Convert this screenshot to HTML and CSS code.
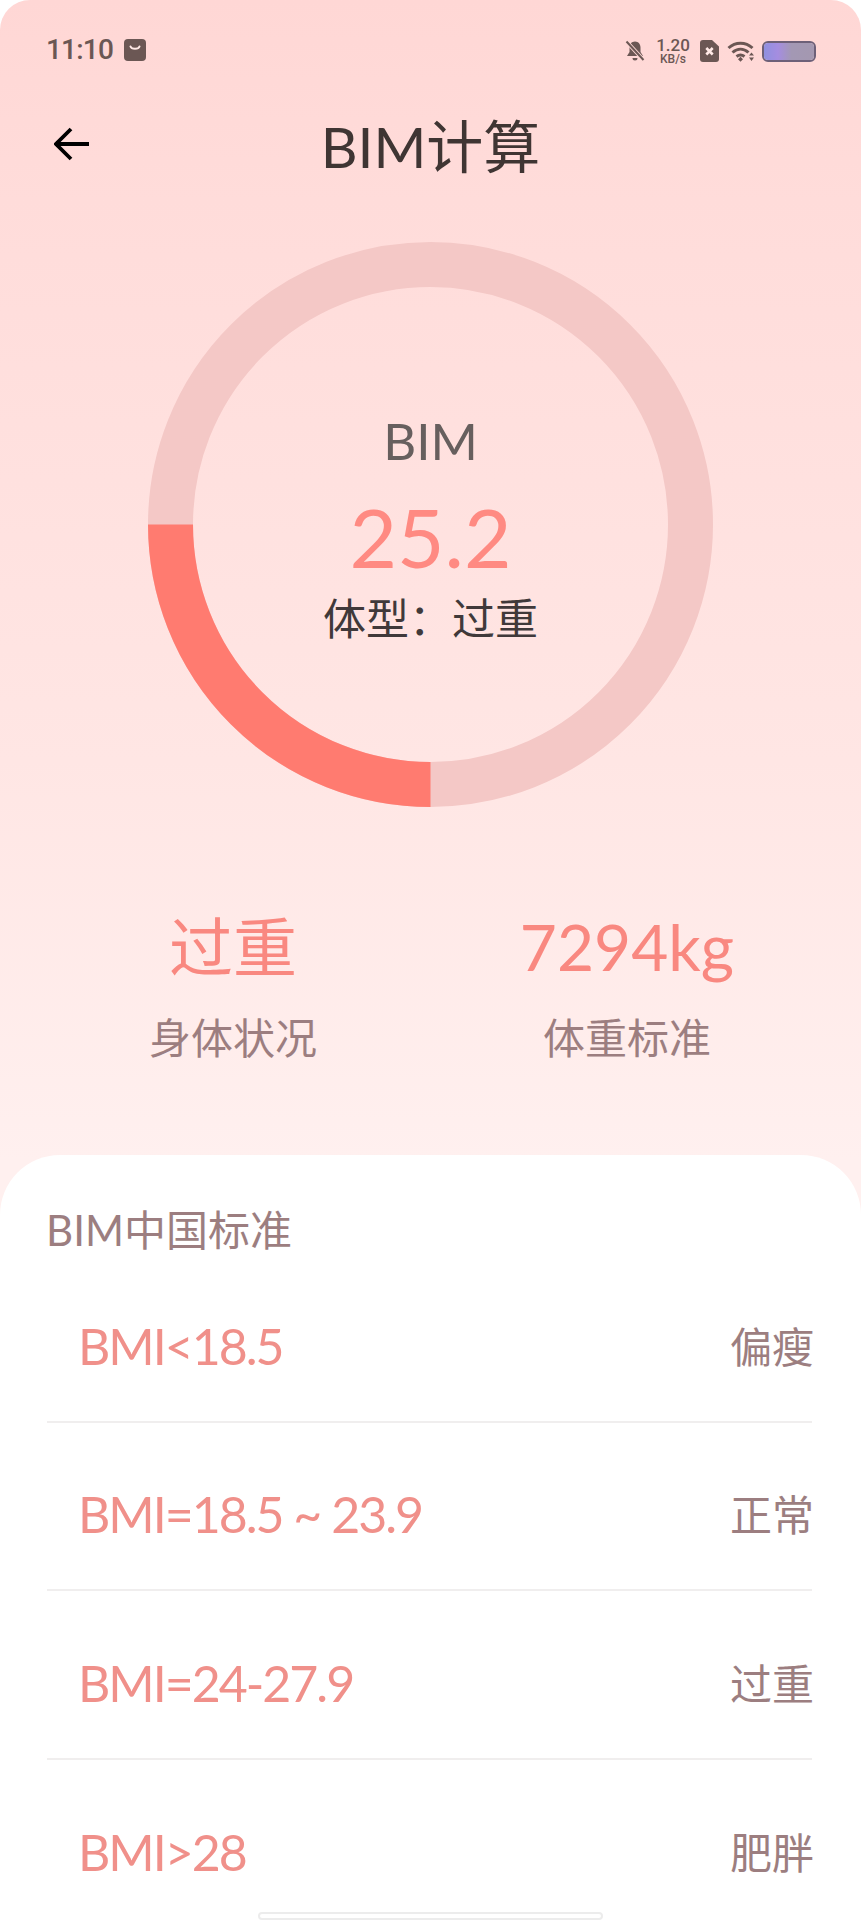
FILE: index.html
```html
<!DOCTYPE html>
<html lang="zh-CN">
<head>
<meta charset="utf-8">
<title>BIM计算</title>
<link rel="stylesheet" href="styles.css">
</head>
<body>
<div class="screen">
  <div class="status">
    <div class="status-left">
      <span class="time">11:10</span>
      <svg class="bag" viewBox="0 0 22 22"><rect width="22" height="22" rx="4" fill="#6b5754"/><path d="M6.500 7.500c1 3 8 3 9 0" fill="none" stroke="#ffe9e6" stroke-width="2" stroke-linecap="round"/></svg>
    </div>
    <div class="status-right">
      <svg class="bell" viewBox="1 0 18 22"><path d="M10 1.500c-3.500 0-5.500 2.800-5.500 6v4.500L2 16h16l-2.500-4V7.500c0-3.200-2-6-5.500-6zM7.500 18h5a2.500 2.500 0 0 1-5 0z" fill="#6b5754"/><path d="M1.500 1.500 18.500 20" stroke="#ffd9d6" stroke-width="4"/><path d="M1.500 1.500 18.500 20" stroke="#6b5754" stroke-width="2"/></svg>
      <div class="speed"><span class="speed-num">1.20</span><span class="speed-unit">KB/s</span></div>
      <svg class="sim" viewBox="0 0 19 22"><path d="M3 0h9l7 6.500V19a3 3 0 0 1-3 3H3a3 3 0 0 1-3-3V3a3 3 0 0 1 3-3z" fill="#6b5754"/><path d="M6.300 8 12.700 14.500M12.700 8 6.300 14.500" stroke="#ffe9e6" stroke-width="2.600"/></svg>
      <svg class="wifi" viewBox="0 0 27 21"><g fill="none" stroke="#6b5754" stroke-width="3"><path d="M1 7c7-6.500 17-6.500 24 0"/><path d="M5 11.500c5-4.500 11-4.500 16 0"/><path d="M9 15.500c3-2.300 5-2.300 8 0"/></g><path d="M10.500 18.300 13 15.800l2.500 2.500L13 20.800z" fill="#6b5754"/><path d="M24 11.500 26.500 14.500h-5zM24 20 21.500 16.500h5z" fill="#6b5754"/></svg>
      <div class="battery"><div class="battery-fill"></div></div>
    </div>
  </div>

  <header class="titlebar">
    <svg class="back" viewBox="0 0 36 34"><path d="M35 17H3M17 2 2 17l15 15" fill="none" stroke="#000" stroke-width="3.800"/></svg>
    <h1 class="title">BIM计算</h1>
  </header>

  <section class="gauge">
    <svg class="ring" viewBox="0 0 565 565">
      <circle cx="282.500" cy="282.500" r="260" fill="none" stroke="#f4c8c6" stroke-width="45"/>
      <path d="M22.500 282.500A260 260 0 0 0 282.500 542.500" fill="none" stroke="#ff7b70" stroke-width="45"/>
    </svg>
    <div class="gauge-text">
      <div class="gauge-label">BIM</div>
      <div class="gauge-value">25.2</div>
      <div class="gauge-type">体型：过重</div>
    </div>
  </section>

  <section class="stats">
    <div class="stat">
      <div class="stat-value">过重</div>
      <div class="stat-label">身体状况</div>
    </div>
    <div class="stat">
      <div class="stat-value">7294kg</div>
      <div class="stat-label">体重标准</div>
    </div>
  </section>

  <section class="sheet">
    <h2 class="sheet-title">BIM中国标准</h2>
    <ul class="rows">
      <li class="row"><span class="row-range">BMI&lt;18.5</span><span class="row-name">偏瘦</span></li>
      <li class="row"><span class="row-range">BMI=18.5 ~ 23.9</span><span class="row-name">正常</span></li>
      <li class="row"><span class="row-range">BMI=24-27.9</span><span class="row-name">过重</span></li>
      <li class="row"><span class="row-range">BMI&gt;28</span><span class="row-name">肥胖</span></li>
    </ul>
    <div class="home-bar"></div>
  </section>
</div>
</body>
</html>
```
FILE: styles.css
```css
* { box-sizing: border-box; }
html, body { margin: 0; padding: 0; background: #fff; }
body { font-family: "Lato", "Noto Sans CJK SC", sans-serif; }
.screen {
  width: 861px;
  height: 1920px;
  overflow: hidden;
  display: flex;
  flex-direction: column;
  border-radius: 30px 30px 0 0;
  background: linear-gradient(180deg, #ffd7d5 0%, #ffdcda 200px, #ffe6e4 760px, #fff0ef 1160px);
}
.status {
  height: 100px;
  flex: none;
  padding: 38px 45px 0 46px;
  display: flex;
  justify-content: space-between;
  align-items: flex-start;
}
.status-left { display: flex; align-items: center; gap: 11px; height: 24px; }
.time { font-family: "Roboto", sans-serif; font-size: 28px; line-height: 24px; font-weight: 500; color: #6b5754; letter-spacing: -0.8px; }
.bag { width: 22px; height: 22px; }
.status-right { display: flex; align-items: center; height: 26px; }
.bell { width: 20px; height: 22px; margin-right: 11px; }
.speed { display: flex; flex-direction: column; align-items: center; width: 34px; color: #6b5754; font-family: "Roboto", sans-serif; font-weight: 500; margin-right: 10px; }
.speed-num { font-size: 17px; line-height: 15px; }
.speed-unit { font-size: 12px; line-height: 12px; }
.sim { width: 19px; height: 22px; margin-right: 8px; }
.wifi { width: 28px; height: 21px; margin-right: 7px; }
.battery {
  width: 54px;
  height: 21px;
  border: 2px solid #6d6078;
  border-radius: 6px;
  overflow: hidden;
}
.battery-fill {
  height: 100%;
  background: linear-gradient(90deg, #8f90e0 0%, #a58de0 28%, #a398b4 55%, #a498b0 100%);
}
.titlebar {
  height: 90px;
  flex: none;
  position: relative;
  display: flex;
  align-items: center;
  justify-content: center;
}
.back { position: absolute; left: 54px; top: 27px; width: 36px; height: 34px; }
.title { margin: 2px 0 0; font-size: 57px; line-height: 88px; font-weight: 400; color: #3f3533; }
.gauge {
  flex: none;
  margin: 52px 0 0 148px;
  width: 565px;
  height: 565px;
  display: grid;
}
.ring, .gauge-text { grid-area: 1 / 1; }
.ring { width: 565px; height: 565px; display: block; }
.gauge-text {
  display: flex;
  flex-direction: column;
  align-items: center;
  padding-top: 169px;
}
.gauge-label { font-size: 51px; line-height: 60px; color: #675f5e; }
.gauge-value { margin-top: 20px; font-size: 82px; line-height: 90px; color: #ff8a82; }
.gauge-type { font-size: 43px; line-height: 76px; color: #40393a; }
.stats {
  flex: none;
  margin-top: 101px;
  display: grid;
  grid-template-columns: 394px 394px;
  padding-left: 36px;
  padding-right: 37px;
}
.stat { display: flex; flex-direction: column; align-items: center; }
.stat-value { font-size: 64px; line-height: 78px; color: #f98880; }
.stat-label { font-size: 42px; line-height: 60px; color: #9c7e80; margin-top: 22px; }
.sheet {
  margin-top: 87px;
  flex: 1;
  min-height: 0;
  position: relative;
  background: #fff;
  border-radius: 60px 60px 0 0;
  padding: 50px 49px 0 47px;
}
.sheet-title { margin: 0 0 0 -1px; font-size: 42px; line-height: 50px; font-weight: 400; color: #9c7e80; }
.rows { list-style: none; margin: -1px 0 0; padding: 0; }
.row {
  height: 168.500px;
  padding: 17px 0 0 31px;
  display: flex;
  align-items: center;
  justify-content: space-between;
  border-bottom: 2px solid #f0eeee;
}
.row:last-child { border-bottom: none; }
.row-range { font-size: 50px; letter-spacing: -2px; color: #f0908a; }
.row-name { font-size: 42px; margin: -3px -2px 0 0; color: #9c7e80; }
.home-bar {
  position: absolute;
  left: 258px;
  bottom: 0;
  width: 345px;
  height: 8px;
  border: 2px solid #ececec;
  border-radius: 4px;
  background: #fff;
}
```
